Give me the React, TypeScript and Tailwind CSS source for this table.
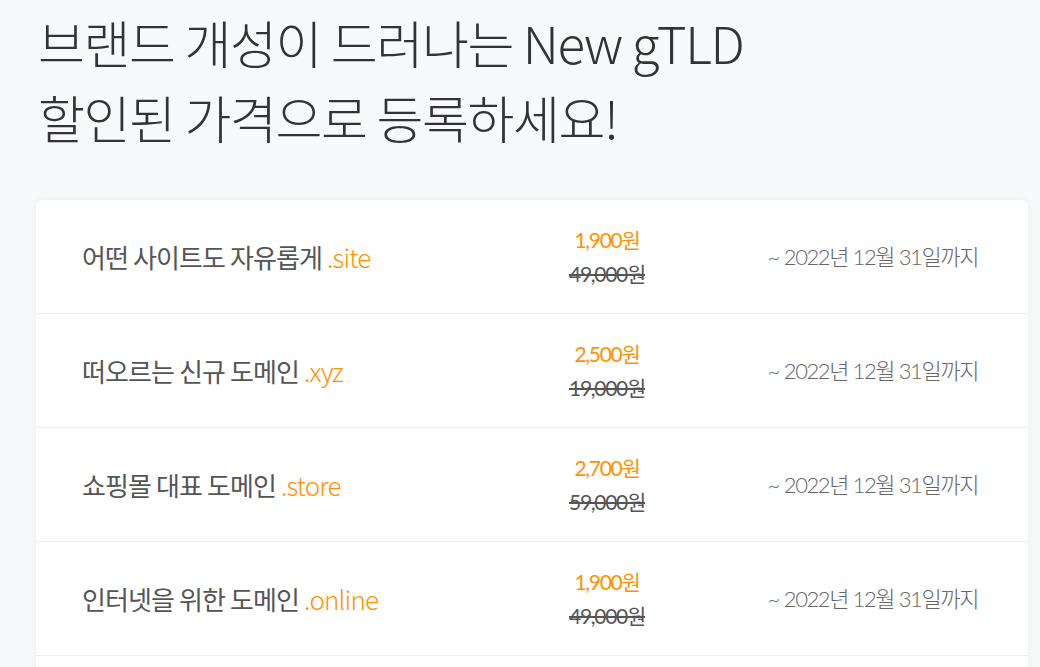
const rows = [
  { name: "어떤 사이트도 자유롭게", ext: ".site", price: "1,900원", original: "49,000원" },
  { name: "떠오르는 신규 도메인", ext: ".xyz", price: "2,500원", original: "19,000원" },
  { name: "쇼핑몰 대표 도메인", ext: ".store", price: "2,700원", original: "59,000원" },
  { name: "인터넷을 위한 도메인", ext: ".online", price: "1,900원", original: "49,000원" },
];

export default function App() {
  return (
    <div className="h-screen overflow-hidden bg-[#f8f9fb] px-[36px] pt-[5px] font-['Noto_Sans_CJK_KR',sans-serif]">
      <h1 className="pl-[2px] text-[51px] font-light leading-[75px] tracking-[-1.4px] text-[#333]">
        브랜드 개성이 드러나는 New gTLD
        <br />
        할인된 가격으로 등록하세요!
      </h1>

      <div className="mt-[45px] mr-[-24px] rounded-md bg-white shadow-[0_0_6px_rgba(0,0,0,0.06)]">
        {rows.map((row, i) => (
          <div
            key={i}
            className="flex h-[114px] items-center border-b border-[#eeeeee] pl-[46px] pr-[50px]"
          >
            <div className="w-[440px] text-[26px] tracking-[-0.9px] text-[#555]">
              {row.name} <span className="font-light text-[#ff9200]">{row.ext}</span>
            </div>
            <div className="flex w-[170px] flex-col items-center font-['Lato','Noto_Sans_CJK_KR',sans-serif] text-[21px] leading-[34px] tracking-[-1.3px]">
              <span className="text-[#ff9200]">{row.price}</span>
              <span className="text-[#555] line-through">{row.original}</span>
            </div>
            <div className="flex-1 text-right font-['Lato','Noto_Sans_CJK_KR',sans-serif] text-[22px] font-light tracking-[-1.4px] text-[#666]">
              <span className="mr-[5px]">~</span>2022년 12월 31일까지
            </div>
          </div>
        ))}
        {/* next row starts below the fold */}
        <div className="h-[40px]" />
      </div>
    </div>
  );
}
